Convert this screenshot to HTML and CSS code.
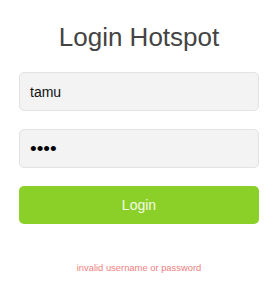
FILE: index.html
```html
<!DOCTYPE html>
<html>
<head>
<meta charset="utf-8">
<link rel="stylesheet" href="styles.css">
</head>
<body>
<div class="box">
  <h1 class="title">Login Hotspot</h1>
  <form class="form">
    <input class="field" type="text" value="tamu">
    <input class="field field-pass" type="password" value="tamu">
    <button class="btn" type="button">Login</button>
  </form>
  <p class="error">invalid username or password</p>
</div>
</body>
</html>
```
FILE: styles.css
```css
html, body {
  margin: 0;
  padding: 0;
  background: #fff;
}
body {
  font-family: "Liberation Sans", Arial, sans-serif;
}
.box {
  padding: 0 19px 0 19px;
  display: flex;
  flex-direction: column;
}
.title {
  margin: 0;
  padding-top: 22px;
  height: 50px;
  box-sizing: border-box;
  font-size: 26px;
  font-weight: normal;
  color: #444;
  text-align: center;
  line-height: 30px;
}
.form {
  display: flex;
  flex-direction: column;
  gap: 18px;
  margin-top: 22px;
}
.field {
  box-sizing: border-box;
  width: 240px;
  height: 39px;
  margin: 0;
  padding: 0 10px;
  border: 1px solid #e2e2e2;
  border-radius: 5px;
  background: #f3f3f3;
  font-family: "Liberation Sans", Arial, sans-serif;
  font-size: 14px;
  color: #111;
  outline: none;
}
.field-pass {
  font-size: 19px;
  color: #000;
}
.btn {
  box-sizing: border-box;
  width: 240px;
  height: 38px;
  margin: 0;
  border: none;
  border-radius: 5px;
  background: #8bd028;
  color: #f4fbe8;
  font-family: "Liberation Sans", Arial, sans-serif;
  font-size: 14px;
  cursor: pointer;
}
.error {
  margin: 38px 0 0 0;
  text-align: center;
  font-size: 9.4px;
  line-height: 12px;
  color: #f08080;
}
```
